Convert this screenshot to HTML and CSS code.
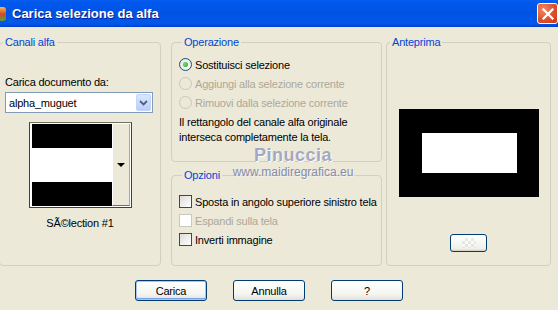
FILE: index.html
```html
<!DOCTYPE html>
<html lang="it">
<head>
    <meta charset="UTF-8">
    <title>Carica selezione da alfa</title>
    <link rel="stylesheet" href="styles.css">
</head>
<body>
    <div class="window">
        <div class="titlebar">
            <span class="app-icon"></span>
            <span class="title">Carica selezione da alfa</span>
            <span class="close">
                <svg width="12" height="12" viewBox="0 0 12 12">
                    <path d="M1.5 1.5 L10.5 10.5 M10.5 1.5 L1.5 10.5" stroke="#fff" stroke-width="2.2" stroke-linecap="square"/>
                </svg>
            </span>
        </div>

        <div class="content">
            <fieldset class="group canali">
                <legend>Canali alfa</legend>
                <div class="field-label">Carica documento da:</div>
                <div class="combo">
                    <span class="combo-text">alpha_muguet</span>
                    <span class="combo-btn">
                        <svg width="9" height="6" viewBox="0 0 9 6">
                            <path d="M1 1 L4.5 4.5 L8 1" fill="none" stroke="#4d6185" stroke-width="1.8"/>
                        </svg>
                    </span>
                </div>
                <div class="thumb">
                    <div class="thumb-img">
                        <div class="band black"></div>
                        <div class="band white"></div>
                        <div class="band black"></div>
                    </div>
                    <div class="thumb-btn"><span class="arrow"></span></div>
                </div>
                <div class="thumb-name">SÃ©lection #1</div>
            </fieldset>

            <div class="col-mid">
                <fieldset class="group operazione">
                    <legend>Operazione</legend>
                    <label class="opt"><span class="radio checked"></span>Sostituisci selezione</label>
                    <label class="opt disabled"><span class="radio"></span>Aggiungi alla selezione corrente</label>
                    <label class="opt disabled"><span class="radio"></span>Rimuovi dalla selezione corrente</label>
                    <p class="note">Il rettangolo del canale alfa originale<br>interseca completamente la tela.</p>
                </fieldset>
                <fieldset class="group opzioni">
                    <legend>Opzioni</legend>
                    <label class="opt"><span class="check"></span>Sposta in angolo superiore sinistro tela</label>
                    <label class="opt disabled"><span class="check"></span>Espandi sulla tela</label>
                    <label class="opt"><span class="check"></span>Inverti immagine</label>
                </fieldset>
            </div>

            <fieldset class="group anteprima">
                <legend>Anteprima</legend>
                <div class="preview">
                    <div class="preview-inner"></div>
                </div>
                <div class="small-btn"><span class="checker"></span></div>
            </fieldset>
        </div>

        <div class="buttons">
            <div class="btn default">Carica</div>
            <div class="btn">Annulla</div>
            <div class="btn">?</div>
        </div>

        <div class="watermark">
            <div class="wm-name">Pinuccia</div>
            <div class="wm-site">www.maidiregrafica.eu</div>
        </div>
    </div>
</body>
</html>
```

FILE: styles.css
```css
body {
    margin: 0;
    background: #ece9d8;
    font-family: "Liberation Sans", Arial, sans-serif;
    font-size: 11px;
    letter-spacing: -0.2px;
    color: #000;
}
.window {
    position: relative;
    width: 558px;
    height: 310px;
    background: #ece9d8;
    overflow: hidden;
}

/* barra del titolo */
.titlebar {
    height: 27px;
    display: flex;
    align-items: center;
    background: linear-gradient(#0a5ff0 0%, #0058ee 10%, #0053e1 50%, #0058ec 85%, #0050e0 92%, #003fd0 100%);
}
.app-icon {
    width: 6px;
    height: 14px;
    background: linear-gradient(#f4c04a, #d44a2a 50%, #55a040);
    border-radius: 0 3px 3px 0;
}
.title {
    margin-left: 6px;
    color: #fff;
    font-weight: bold;
    font-size: 13px;
    letter-spacing: 0;
    text-shadow: 1px 1px #0a1e8c;
}
.close {
    margin-left: auto;
    margin-right: 0;
    width: 19px;
    height: 19px;
    display: flex;
    align-items: center;
    justify-content: center;
    border: 1px solid #fff;
    border-radius: 3px;
    background: radial-gradient(circle at 30% 30%, #f08a6a, #e0502a 55%, #c23a16);
}

/* gruppi */
.content {
    display: flex;
    padding-top: 9px;
    height: 230px;
}
.group {
    margin: 0;
    padding: 0;
    border: 1px solid #d0d0bf;
    border-radius: 4px;
    box-sizing: border-box;
}
.group legend {
    color: #0046d5;
    padding: 0 2px;
    margin-left: 3px;
    line-height: 13px;
}
.canali {
    width: 162px;
    margin-left: -1px;
    display: flex;
    flex-direction: column;
}
.col-mid {
    width: 211px;
    margin-left: 10px;
    display: flex;
    flex-direction: column;
    gap: 7px;
}
.operazione {
    height: 126px;
    padding-left: 7px;
}
.opzioni {
    flex: 1;
    padding-left: 7px;
}
.anteprima {
    width: 165px;
    margin-left: 4px;
    display: flex;
    flex-direction: column;
    align-items: center;
}

/* canali alfa */
.field-label {
    margin: 27px 0 0 5px;
}
.combo {
    margin: 4px 0 0 5px;
    width: 148px;
    height: 21px;
    box-sizing: border-box;
    border: 1px solid #7f9db9;
    background: #fff;
    display: flex;
    align-items: center;
}
.combo-text {
    padding-left: 3px;
    flex: 1;
}
.combo-btn {
    width: 15px;
    height: 17px;
    margin-right: 1px;
    border-radius: 2px;
    background: linear-gradient(#dce7fd, #b9cdf8);
    border: 1px solid #c3d3fd;
    box-sizing: border-box;
    display: flex;
    align-items: center;
    justify-content: center;
}
.thumb {
    margin: 9px 0 0 29px;
    width: 103px;
    height: 86px;
    box-sizing: border-box;
    border: 1px solid #404040;
    border-top-color: #716f64;
    display: flex;
    background: #fff;
}
.thumb-img {
    width: 82px;
    margin: 1px 0 1px 2px;
    display: flex;
    flex-direction: column;
}
.band {
    flex: 1;
}
.band.black {
    background: #000;
    flex: 0 0 24px;
}
.band.white {
    background: #fff;
}
.thumb-btn {
    width: 16px;
    margin: 1px 1px 1px auto;
    background: #ece9d8;
    border-left: 1px solid #fff;
    border-right: 1px solid #aca899;
    border-bottom: 1px solid #716f64;
    display: flex;
    align-items: center;
    justify-content: center;
}
.arrow {
    width: 0;
    height: 0;
    border-left: 4px solid transparent;
    border-right: 4px solid transparent;
    border-top: 4px solid #000;
}
.thumb-name {
    margin: 9px 0 0 0;
    width: 160px;
    text-align: center;
}

/* opzioni */
.opt {
    display: flex;
    align-items: center;
    height: 13px;
    margin-top: 6px;
    white-space: nowrap;
}
.operazione .opt:first-of-type {
    margin-top: 9px;
}
.opzioni .opt {
    margin-top: 6px;
}
.opzioni .opt:first-of-type {
    margin-top: 13px;
}
.opt.disabled {
    color: #aca899;
}
.radio {
    width: 13px;
    height: 13px;
    box-sizing: border-box;
    border: 1px solid #1c5180;
    border-radius: 50%;
    background: radial-gradient(circle at 60% 60%, #fff, #dcdcd5);
    margin-right: 3px;
    display: flex;
    align-items: center;
    justify-content: center;
}
.radio.checked::after {
    content: "";
    width: 5px;
    height: 5px;
    border-radius: 50%;
    background: radial-gradient(circle at 40% 40%, #6ee46e, #21a121);
}
.disabled .radio {
    border-color: #cac8bb;
    background: #ece9d8;
}
.check {
    width: 13px;
    height: 13px;
    box-sizing: border-box;
    border: 1px solid #1c5180;
    background: linear-gradient(135deg, #dcdcd7, #fff);
    margin-right: 3px;
}
.disabled .check {
    border-color: #cac8bb;
    background: #fff;
}
.note {
    margin: 6px 0 0 0;
    line-height: 15px;
}

/* anteprima */
.preview {
    margin-top: 60px;
    width: 140px;
    height: 88px;
    background: #000;
    display: flex;
    align-items: center;
    justify-content: center;
}
.preview-inner {
    width: 95px;
    height: 40px;
    background: #fff;
    margin-left: 1px;
}
.small-btn {
    margin-top: 37px;
    width: 37px;
    height: 18px;
    box-sizing: border-box;
    border: 1px solid #003c74;
    border-radius: 3px;
    background: linear-gradient(#fff, #f0f0ea 85%, #d6d0c5);
    display: flex;
    align-items: center;
    justify-content: center;
}
.checker {
    width: 14px;
    height: 10px;
    opacity: 0.35;
    background: repeating-conic-gradient(#c8c8c8 0 25%, #fff 0 50%) 0 0 / 6px 6px;
}

/* pulsanti */
.buttons {
    display: flex;
    gap: 26px;
    padding: 14px 0 0 135px;
}
.btn {
    width: 72px;
    height: 21px;
    box-sizing: border-box;
    border: 1px solid #003c74;
    border-radius: 3px;
    background: linear-gradient(#fff, #f4f4f0 70%, #e3e0d6);
    display: flex;
    align-items: center;
    justify-content: center;
}
.btn.default {
    box-shadow: inset 0 0 0 1px #a8c6f5, inset 0 -1px 0 1px #7ba2e7;
}

/* filigrana */
.watermark {
    position: absolute;
    left: 208px;
    top: 145px;
    width: 170px;
    text-align: center;
    pointer-events: none;
    letter-spacing: 0;
}
.wm-name {
    font-family: "Liberation Sans", sans-serif;
    font-weight: bold;
    font-size: 18px;
    line-height: 20px;
    color: #a3a9c2;
    letter-spacing: 0.5px;
    text-shadow: 1px 1px 0 #fff;
}
.wm-site {
    font-family: "Liberation Sans", sans-serif;
    font-size: 12px;
    line-height: 14px;
    color: #878ca6;
    text-shadow: 1px 1px 0 #f4f4f4;
}
```
